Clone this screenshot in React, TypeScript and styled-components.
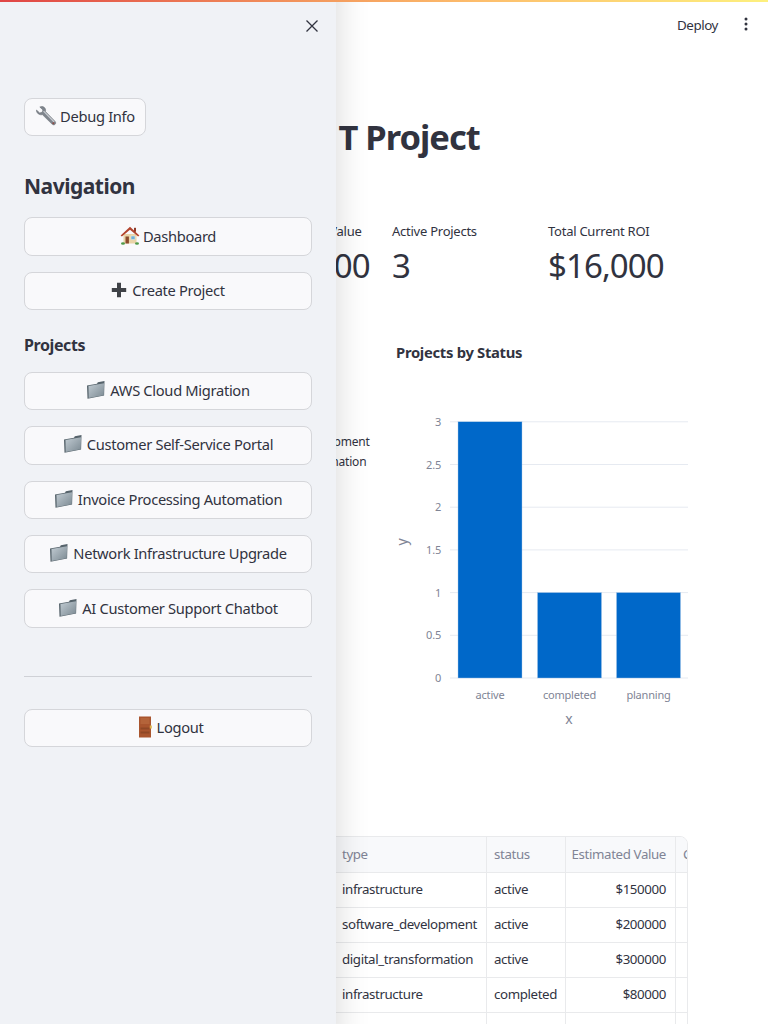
import React from "react";
import styled, { createGlobalStyle } from "styled-components";

const FONT = `"Noto Sans", "Open Sans", "Liberation Sans", sans-serif`;

const Global = createGlobalStyle`
  html, body { margin: 0; padding: 0; background: #fff; }
  body { font-family: ${FONT}; color: #31333f; width: 768px; height: 1024px; overflow: hidden; }
  * { box-sizing: border-box; }
`;

const Page = styled.div`
  position: relative;
  width: 768px;
  height: 1024px;
  overflow: hidden;
  background: #fff;
`;
const Decoration = styled.div`
  position: absolute;
  top: 0;
  left: 0;
  right: 0;
  height: 2px;
  z-index: 5;
  background: linear-gradient(90deg, #e04545 0%, #f49c5e 43%, #fdbd6c 62%, #fdf07e 100%);
`;
const TopBar = styled.header`
  display: flex;
  justify-content: flex-end;
  align-items: center;
  height: 48px;
  padding: 2px 14px 0 0;
  gap: 20px;
`;
const Deploy = styled.span`
  font-size: 13.4px;
  letter-spacing: -0.45px;
`;
const MenuDots = styled.svg`
  display: block;
  margin-top: -2px;
`;
const Main = styled.main`
  padding: 59px 80px 0;
`;
const Title = styled.h1`
  margin: 0;
  font-size: 34.5px;
  line-height: 60px;
  font-weight: 700;
  letter-spacing: -1px;
  padding-left: 242px;
  white-space: nowrap;
`;
const TitleLead = styled.span`
  margin-right: 4px;
`;
const Metrics = styled.section`
  display: grid;
  grid-template-columns: repeat(4, 140px);
  gap: 16px;
  margin-top: 54px;
`;
const Metric = styled.div`
  height: 68px;
  white-space: nowrap;
`;
const MetricLabel = styled.div`
  font-size: 13px;
  line-height: 20px;
  letter-spacing: -0.25px;
`;
const MetricValue = styled.div`
  font-size: 33px;
  line-height: 50px;
  letter-spacing: -0.9px;
`;
const Charts = styled.section`
  display: grid;
  grid-template-columns: 296px 296px;
  gap: 16px;
  margin-top: 41px;
  height: 420px;
`;
const PieLegend = styled.div`
  padding: 102px 0 0 165px;
  font-size: 12px;
  line-height: 20px;
  letter-spacing: -0.2px;
  white-space: nowrap;
`;
const ChartSvg = styled.svg`
  display: block;
  font-family: ${FONT};
`;
const TableWrap = styled.div`
  margin-top: 86px;
  height: 260px;
  border: 1px solid #e9eaec;
  border-radius: 8px;
  overflow: hidden;
  width: 608px;
`;
const Grid = styled.div`
  display: grid;
  grid-template-columns: 254px 152px 79px 110px 30px;
`;
const Cell = styled.div<{ $head?: boolean; $right?: boolean }>`
  height: ${(p) => (p.$head ? "36px" : "35px")};
  padding: 0 9px 2px 7px;
  display: flex;
  align-items: center;
  justify-content: ${(p) => (p.$right ? "flex-end" : "flex-start")};
  font-size: 13.3px;
  letter-spacing: -0.38px;
  white-space: nowrap;
  overflow: hidden;
  border-right: 1px solid #e9eaec;
  border-bottom: 1px solid #e9eaec;
  color: ${(p) => (p.$head ? "#808495" : "#31333f")};
  background: ${(p) => (p.$head ? "#f8f9fb" : "#fff")};
`;

const Sidebar = styled.aside`
  position: absolute;
  top: 0;
  left: 0;
  bottom: 0;
  width: 336px;
  z-index: 3;
  background: #f0f2f6;
  box-shadow: -2rem 0 2rem 2rem rgba(0, 0, 0, 0.16);
  padding: 98px 24px 0;
`;
const CloseBtn = styled.button`
  position: absolute;
  top: 18px;
  right: 16px;
  width: 16px;
  height: 16px;
  padding: 0;
  border: 0;
  background: none;
  color: #31333f;
  display: flex;
`;
const Btn = styled.button<{ $auto?: boolean }>`
  display: flex;
  align-items: center;
  justify-content: center;
  gap: 3px;
  width: ${(p) => (p.$auto ? "122px" : "288px")};
  height: 38.4px;
  border: 1px solid #d5d6da;
  border-radius: 8px;
  background: #f9f9fb;
  color: #31333f;
  font-family: ${FONT};
  font-size: 14.7px;
  letter-spacing: -0.32px;
  padding: 0 0 2px;
  white-space: nowrap;
`;
const NavTitle = styled.h2`
  margin: 35px 0 16px;
  font-size: 21px;
  line-height: 30px;
  font-weight: 700;
  letter-spacing: -0.5px;
`;
const SubTitle = styled.h3`
  margin: 20px 0 11.7px;
  font-size: 16px;
  line-height: 30px;
  font-weight: 700;
  letter-spacing: -0.4px;
`;
const Stack = styled.div<{ $gap: number }>`
  display: flex;
  flex-direction: column;
  gap: ${(p) => p.$gap}px;
`;
const Divider = styled.hr`
  margin: 48px 0 32px;
  border: 0;
  border-top: 1px solid #cfd1d6;
`;
const Emoji = styled.svg`
  flex: none;
  display: block;
`;

const Wrench = () => (
  <Emoji width="22" height="22" viewBox="0 0 22 22">
    <path d="M1.500 5 4.700 7.900l2.500-.6.7-2.400L4.800 2C6.700 1 9 1.500 10 3.200c.7 1.100.7 2.300.4 3.300l9.500 9.700c1 1 1 2.300.2 3.100-.8.800-2.200.8-3.100-.2L7.300 9.600C6.100 10 4.500 9.800 3.200 8.800 2 7.800 1.300 6.400 1.500 5Z" fill="#7f858d" stroke="#5f646b" strokeWidth=".5" />
    <path d="M8.600 6.200 19.200 17" stroke="#c9cdd2" strokeWidth="1.200" />
    <circle cx="18.300" cy="18.300" r="1" fill="#8f4a42" />
  </Emoji>
);
const House = () => (
  <Emoji width="20" height="20" viewBox="0 0 20 20">
    <rect x="3.500" y="8" width="13" height="9.500" fill="#ead4a8" />
    <path d="M10 .8 .6 9.500l1.300 1.100L10 3.800l8.100 6.800 1.300-1.100Z" fill="#b3452e" />
    <rect x="14" y="1.800" width="2" height="4" fill="#8f3b28" />
    <rect x="5.500" y="10.500" width="3.400" height="7" fill="#8a4a2b" />
    <rect x="11" y="10" width="4" height="3.600" fill="#6fb1d8" stroke="#f4efe3" strokeWidth=".5" />
    <ellipse cx="3" cy="17.500" rx="2" ry="1.200" fill="#4f9a48" />
    <ellipse cx="17" cy="17.500" rx="2" ry="1.200" fill="#4f9a48" />
  </Emoji>
);
const Plus = () => (
  <Emoji width="16" height="16" viewBox="0 0 16 16" style={{ marginRight: 2 }}>
    <path d="M6 .8h4v5.200h5.200v4H10v5.200H6V10H.8V6H6Z" fill="#3f4247" />
  </Emoji>
);
const Folder = () => (
  <Emoji width="20" height="20" viewBox="0 0 20 20" style={{ marginRight: 1 }}>
    <defs>
      <linearGradient id="fld" x1="0" y1="0" x2="1" y2="1">
        <stop offset="0" stopColor="#c2ccd3" />
        <stop offset="1" stopColor="#7b8992" />
      </linearGradient>
    </defs>
    <path d="M1 5.500 11 3.700l.8-1.500 6.700-1.200-.4 14.500L1.500 18.700Z" fill="#56636b" />
    <path d="M2.500 6 18 3.200l-.2 12L2.700 18Z" fill="url(#fld)" />
  </Emoji>
);
const Door = () => (
  <Emoji width="20" height="22" viewBox="0 0 20 22" style={{ marginRight: 1 }}>
    <rect x="6" y="0.500" width="12" height="21" fill="#a9552e" />
    <rect x="7.500" y="2" width="9" height="6" fill="#b4643a" />
    <rect x="7.500" y="11.500" width="9" height="2" fill="#8f4826" />
    <rect x="7.500" y="15.500" width="9" height="2" fill="#8f4826" />
    <rect x="16.800" y="9.500" width="2" height="3" fill="#dcb54c" />
  </Emoji>
);

const grid = [3, 2.5, 2, 1.5, 1, 0.5, 0];
const gy = (v: number) => 678 - v * 85.4;
const bars = [
  { label: "active", x: 458, v: 3 },
  { label: "completed", x: 537.5, v: 1 },
  { label: "planning", x: 616.5, v: 1 },
];

const rows = [
  ["infrastructure", "active", "$150000"],
  ["software_development", "active", "$200000"],
  ["digital_transformation", "active", "$300000"],
  ["infrastructure", "completed", "$80000"],
  ["software_development", "planning", "$120000"],
];

export default function App() {
  return (
    <Page>
      <Global />
      <Decoration />
      <TopBar>
        <Deploy>Deploy</Deploy>
        <MenuDots width="16" height="16" viewBox="0 0 16 16" fill="#31333f">
          <circle cx="8" cy="3" r="1.500" />
          <circle cx="8" cy="8" r="1.500" />
          <circle cx="8" cy="13" r="1.500" />
        </MenuDots>
      </TopBar>
      <Main>
        <Title><TitleLead>I</TitleLead>T Project</Title>
        <Metrics>
          <Metric><MetricLabel>Total Projects</MetricLabel><MetricValue>5</MetricValue></Metric>
          <Metric><MetricLabel>Total Estimated Value</MetricLabel><MetricValue>$850,000</MetricValue></Metric>
          <Metric><MetricLabel>Active Projects</MetricLabel><MetricValue>3</MetricValue></Metric>
          <Metric><MetricLabel>Total Current ROI</MetricLabel><MetricValue>$16,000</MetricValue></Metric>
        </Metrics>
        <Charts>
          <PieLegend>
            <div>software_development</div>
            <div>digital_transformation</div>
          </PieLegend>
          <ChartSvg width="296" height="420" viewBox="392 330 296 420">
            <text x="396" y="358" fontSize="14.8" fontWeight="700" letterSpacing="-0.3" fill="#31333f">Projects by Status</text>
            {grid.map((v) => (
              <g key={v}>
                <line x1="450" x2="688" y1={gy(v)} y2={gy(v)} stroke="#e6eaf1" strokeWidth="1" />
                <text x="441" y={gy(v) + 4} textAnchor="end" fontSize="11" letterSpacing="-0.2" fill="#808495">{v}</text>
              </g>
            ))}
            {bars.map((b) => (
              <g key={b.label}>
                <rect x={b.x} y={gy(b.v)} width="64" height={678 - gy(b.v)} fill="#0068c9" stroke="#a9c8e8" strokeWidth=".4" />
                <text x={b.x + 32} y="699" textAnchor="middle" fontSize="11" letterSpacing="-0.2" fill="#808495">{b.label}</text>
              </g>
            ))}
            <text x="569" y="724" textAnchor="middle" fontSize="14" fill="#808495">x</text>
            <text transform="translate(407 542) rotate(-90)" textAnchor="middle" fontSize="14" fill="#808495">y</text>
          </ChartSvg>
        </Charts>
        <TableWrap>
          <Grid>
            <Cell $head>name</Cell><Cell $head>type</Cell><Cell $head>status</Cell><Cell $head $right>Estimated Value</Cell><Cell $head>Current</Cell>
            {rows.map((r, i) => (
              <React.Fragment key={i}>
                <Cell />
                <Cell>{r[0]}</Cell>
                <Cell>{r[1]}</Cell>
                <Cell $right>{r[2]}</Cell>
                <Cell />
              </React.Fragment>
            ))}
          </Grid>
        </TableWrap>
      </Main>
      <Sidebar>
        <CloseBtn aria-label="Close">
          <svg width="16" height="16" viewBox="0 0 16 16" stroke="#31333f" strokeWidth="1.300" fill="none">
            <path d="M2.500 2.500 13.500 13.500M13.500 2.500 2.500 13.500" />
          </svg>
        </CloseBtn>
        <Btn $auto><Wrench />Debug Info</Btn>
        <NavTitle>Navigation</NavTitle>
        <Stack $gap={16}>
          <Btn><House />Dashboard</Btn>
          <Btn><Plus />Create Project</Btn>
        </Stack>
        <SubTitle>Projects</SubTitle>
        <Stack $gap={16}>
          <Btn><Folder />AWS Cloud Migration</Btn>
          <Btn><Folder />Customer Self-Service Portal</Btn>
          <Btn><Folder />Invoice Processing Automation</Btn>
          <Btn><Folder />Network Infrastructure Upgrade</Btn>
          <Btn><Folder />AI Customer Support Chatbot</Btn>
        </Stack>
        <Divider />
        <Btn><Door />Logout</Btn>
      </Sidebar>
    </Page>
  );
}
